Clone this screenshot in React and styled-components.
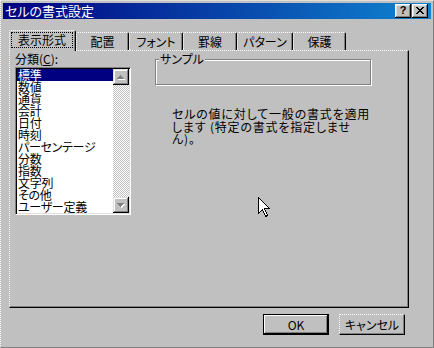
import React from "react";
import styled, { createGlobalStyle } from "styled-components";

const FONT = `"Noto Sans CJK JP", "Noto Sans", sans-serif`;

const Global = createGlobalStyle`
  html, body { margin: 0; padding: 0; background: #c0c0c0; }
  #root { width: 434px; height: 348px; }
`;

const Window = styled.div`
  position: relative;
  box-sizing: border-box;
  width: 434px;
  height: 348px;
  background: #c0c0c0;
  border-top: 1px solid #dfdfdf;
  border-left: 1px dotted #fff;
  border-right: 1px solid #808080;
  border-bottom: 1px solid #808080;
  padding: 2px;
  font-family: ${FONT};
  font-size: 12px;
  font-feature-settings: "palt";
  color: #000;
  display: flex;
  flex-direction: column;
`;

const TitleBar = styled.div`
  flex: none;
  height: 16px;
  background: linear-gradient(to right, #000080, #1084d0);
  display: flex;
  align-items: center;
  padding: 0 3px 0 2px;
`;

const TitleText = styled.span`
  flex: 1;
  color: #fff;
  font-size: 13px;
  line-height: 16px;
  white-space: nowrap;
`;

const CaptionButton = styled.div`
  box-sizing: border-box;
  width: 16px;
  height: 14px;
  margin-left: ${(p) => p.$gap || 0}px;
  background: #c0c0c0;
  box-shadow: inset -1px -1px #000, inset 1px 1px #fff, inset -2px -2px #808080,
    inset 2px 2px #dfdfdf;
  display: flex;
  align-items: center;
  justify-content: center;
  font-family: "Liberation Sans", sans-serif;
  font-weight: bold;
  font-size: 11px;
  line-height: 1;
  padding-bottom: 1px;
`;

const Body = styled.div`
  display: flex;
  flex-direction: column;
  padding: 11px 0 0 6px;
`;

const TabStrip = styled.div`
  display: flex;
  align-items: flex-end;
  height: 20px;
  position: relative;
  z-index: 1;
`;

const Tab = styled.div`
  box-sizing: border-box;
  width: ${(p) => p.$w}px;
  height: ${(p) => (p.$active ? 21 : 18)}px;
  margin-bottom: ${(p) => (p.$active ? -1 : 0)}px;
  background: #c0c0c0;
  border-top: 1px dotted #fff;
  border-left: 1px dotted #fff;
  border-right: 1px solid #000;
  box-shadow: inset -1px 0 #808080;
  border-radius: 2px 2px 0 0;
  display: flex;
  justify-content: center;
  align-items: ${(p) => (p.$active ? "flex-start" : "center")};
  padding-top: ${(p) => (p.$active ? 1 : 0)}px;
  line-height: 14px;
  white-space: nowrap;
  position: relative;
  z-index: ${(p) => (p.$active ? 2 : 1)};
`;

const FocusLabel = styled.span`
  box-sizing: border-box;
  flex: 1;
  margin: 0 2px 0 1px;
  height: 16px;
  border: 1px dotted #000;
  display: flex;
  align-items: center;
  justify-content: center;
  line-height: 14px;
`;

const Panel = styled.div`
  box-sizing: border-box;
  width: 400px;
  height: 258px;
  border-top: 1px dotted #fff;
  border-left: 1px dotted #fff;
  border-right: 1px solid #000;
  border-bottom: 1px solid #000;
  box-shadow: inset -1px -1px #808080;
  padding: 1px 0 0 5px;
  display: flex;
  align-items: flex-start;
`;

const LeftCol = styled.div`
  display: flex;
  flex-direction: column;
  width: 116px;
`;

const FieldLabel = styled.div`
  line-height: 14px;
  height: 14px;
  margin-bottom: 1px;
  white-space: nowrap;
`;

const ListBox = styled.div`
  box-sizing: border-box;
  width: 116px;
  height: 148px;
  background: #fff;
  border-top: 1px solid #808080;
  border-left: 1px solid #808080;
  border-right: 1px dotted #fff;
  border-bottom: 1px dotted #fff;
  box-shadow: inset 1px 1px #000, inset -1px -1px #dfdfdf;
  padding: 1px;
  display: flex;
`;

const Items = styled.div`
  flex: 1;
  display: flex;
  flex-direction: column;
`;

const Item = styled.div`
  height: 12px;
  line-height: 12px;
  padding-left: 1px;
  white-space: nowrap;
  letter-spacing: -0.3px;
  background: ${(p) => (p.$selected ? "#000080" : "transparent")};
  color: ${(p) => (p.$selected ? "#fff" : "#000")};
`;

const ScrollBar = styled.div`
  width: 16px;
  display: flex;
  flex-direction: column;
`;

const ScrollButton = styled.div`
  box-sizing: border-box;
  width: 16px;
  height: 16px;
  flex: none;
  background: #c0c0c0;
  box-shadow: inset -1px -1px #000, inset 1px 1px #dfdfdf, inset -2px -2px #808080,
    inset 2px 2px #fff;
  display: flex;
  align-items: center;
  justify-content: center;
`;

const Track = styled.div`
  flex: 1;
  background-image: repeating-conic-gradient(#fff 0 25%, #c0c0c0 0 50%);
  background-size: 2px 2px;
`;

const RightCol = styled.div`
  display: flex;
  flex-direction: column;
  width: 216px;
  margin-left: 24px;
`;

const GroupBox = styled.div`
  position: relative;
  box-sizing: border-box;
  height: 26px;
  margin-top: 7px;
  border: 1px solid #808080;
  box-shadow: inset 1px 1px #fff, 1px 1px #fff;
`;

const GroupLabel = styled.span`
  position: absolute;
  top: -8px;
  left: 3px;
  padding: 0 1px;
  background: #c0c0c0;
  line-height: 14px;
  white-space: nowrap;
`;

const Description = styled.div`
  margin-top: 23px;
  padding-left: 17px;
  display: flex;
  flex-direction: column;
`;

const DescLine = styled.div`
  height: 12.5px;
  line-height: 12.5px;
  white-space: nowrap;
  letter-spacing: 0.8px;
`;

const ButtonRow = styled.div`
  box-sizing: border-box;
  width: 400px;
  display: flex;
  justify-content: flex-end;
  gap: 10px;
  padding-right: 4px;
  margin-top: 6px;
`;

const Button = styled.div`
  box-sizing: border-box;
  width: 66px;
  height: 21px;
  background: #c0c0c0;
  display: flex;
  align-items: center;
  justify-content: center;
  line-height: 14px;
  ${(p) =>
    p.$default
      ? `border: 1px solid #000;
         box-shadow: inset -1px -1px #000, inset 1px 1px #fff, inset -2px -2px #808080;`
      : `border-top: 1px dotted #fff;
         border-left: 1px dotted #fff;
         border-right: 1px solid #000;
         border-bottom: 1px solid #000;
         box-shadow: inset -1px -1px #808080;`}
`;

const Cursor = styled.svg`
  position: absolute;
  left: 257px;
  top: 196px;
`;

const CloseGlyph = () => {
  const px = [
    [0, 0, 2], [6, 0, 2],
    [1, 1, 2], [5, 1, 2],
    [2, 2, 4],
    [3, 3, 2],
    [2, 4, 4],
    [1, 5, 2], [5, 5, 2],
    [0, 6, 2], [6, 6, 2],
  ];
  return (
    <svg width="8" height="7" shapeRendering="crispEdges">
      {px.map(([x, y, w], i) => (
        <rect key={i} x={x} y={y} width={w} height="1" fill="#000" />
      ))}
    </svg>
  );
};

const Arrow = ({ down }) => {
  const rows = [
    [3, 1],
    [2, 3],
    [1, 5],
    [0, 7],
  ];
  const ordered = down ? [...rows].reverse() : rows;
  return (
    <svg width="8" height="5" shapeRendering="crispEdges">
      {ordered.map(([x, w], i) => (
        <rect key={"s" + i} x={x + 1} y={i + 1} width={w} height="1" fill="#fff" />
      ))}
      {ordered.map(([x, w], i) => (
        <rect key={"g" + i} x={x} y={i} width={w} height="1" fill="#808080" />
      ))}
    </svg>
  );
};

const categories = [
  "標準",
  "数値",
  "通貨",
  "会計",
  "日付",
  "時刻",
  "パーセンテージ",
  "分数",
  "指数",
  "文字列",
  "その他",
  "ユーザー定義",
];

const tabs = [
  { label: "配置", w: 53 },
  { label: "フォント", w: 54 },
  { label: "罫線", w: 54 },
  { label: "パターン", w: 56 },
  { label: "保護", w: 53 },
];

const descLines = [
  "セルの値に対して一般の書式を適用",
  "します (特定の書式を指定しませ",
  "ん)。",
];

export default function App() {
  return (
    <>
      <Global />
      <Window>
        <TitleBar>
          <TitleText>セルの書式設定</TitleText>
          <CaptionButton>?</CaptionButton>
          <CaptionButton $gap={1}>
            <CloseGlyph />
          </CaptionButton>
        </TitleBar>
        <Body>
          <TabStrip>
            <Tab $active $w={67}>
              <FocusLabel>表示形式</FocusLabel>
            </Tab>
            {tabs.map((t) => (
              <Tab key={t.label} $w={t.w}>
                {t.label}
              </Tab>
            ))}
          </TabStrip>
          <Panel>
            <LeftCol>
              <FieldLabel>
                分類(<u>C</u>):
              </FieldLabel>
              <ListBox>
                <Items>
                  {categories.map((c, i) => (
                    <Item key={c} $selected={i === 0}>
                      {c}
                    </Item>
                  ))}
                </Items>
                <ScrollBar>
                  <ScrollButton>
                    <Arrow />
                  </ScrollButton>
                  <Track />
                  <ScrollButton>
                    <Arrow down />
                  </ScrollButton>
                </ScrollBar>
              </ListBox>
            </LeftCol>
            <RightCol>
              <GroupBox>
                <GroupLabel>サンプル</GroupLabel>
              </GroupBox>
              <Description>
                {descLines.map((l) => (
                  <DescLine key={l}>{l}</DescLine>
                ))}
              </Description>
            </RightCol>
          </Panel>
          <ButtonRow>
            <Button $default>OK</Button>
            <Button>キャンセル</Button>
          </ButtonRow>
        </Body>
        <Cursor width="13" height="21" viewBox="0 0 13 21" shapeRendering="crispEdges">
          <path
            d="M0.5 0.5 L0.5 16.5 L4.5 12.5 L7.5 19.5 L9.5 18.5 L6.5 11.5 L11.5 11.5 Z"
            fill="#fff"
            stroke="#000"
            strokeWidth="1"
          />
        </Cursor>
      </Window>
    </>
  );
}
